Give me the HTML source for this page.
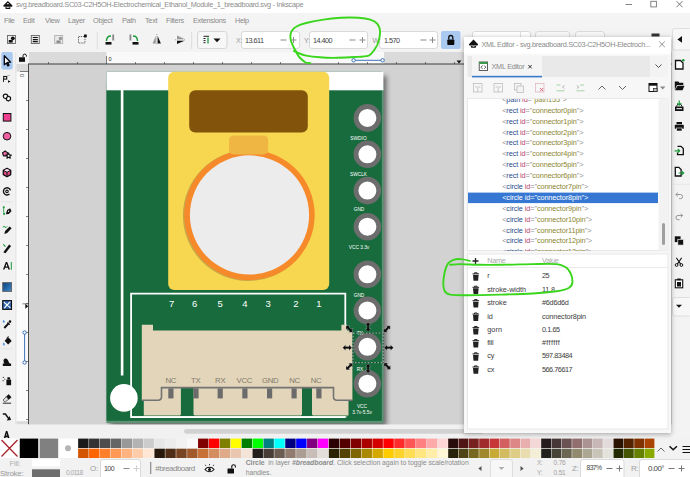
<!DOCTYPE html>
<html><head><meta charset="utf-8">
<style>
html,body{margin:0;padding:0;}
body{width:690px;height:477px;overflow:hidden;background:#f2f2f2;font-family:"Liberation Sans",sans-serif;position:relative;}
.a{position:absolute;}
.t{position:absolute;white-space:nowrap;line-height:1;}
#title{left:0;top:0;width:690px;height:13px;background:#fff;}
#menu{left:0;top:13px;width:690px;height:15px;background:#f4f4f4;}
#menu .t{font-size:7.3px;letter-spacing:-.28px;color:#8a8a8a;top:4px;}
#tool{left:0;top:28px;width:690px;height:24px;background:#f3f3f3;}
.inp{position:absolute;background:#fff;border:1px solid #dcdcdc;border-radius:2px;box-sizing:border-box;}
#lbox{left:0;top:52px;width:14px;height:386px;background:#f1f1f1;}
#canvas{left:14px;top:52px;width:658px;height:386px;background:#d2d2d2;overflow:hidden;}
#rbar{left:672px;top:28px;width:18px;height:410px;background:#f3f3f3;}
#pal{left:0;top:438px;width:690px;height:20px;background:#f2f2f2;}
#status{left:0;top:458px;width:690px;height:19px;background:#f2f2f2;}
#status .t{font-size:8px;color:#999;}
.u{font-size:7.300px;letter-spacing:-.28px;}
.tr{font-size:7.300px;letter-spacing:-.1px;color:#8a8a8a}
.tr i,.tr b,.tr u,.tr s{font-style:normal;font-weight:normal;text-decoration:none}
.tr i{color:#909090}.tr b{color:#2b4c8c}.tr u{color:#b8446e}.tr s{color:#8c8632}
.sel i,.sel b,.sel u,.sel s{color:#fff}
.at{color:#3c3c3c;letter-spacing:-.15px}
#dlg{left:464px;top:37px;width:207px;height:396px;background:#f7f7f7;box-shadow:0 1px 5px rgba(0,0,0,.33);}
</style></head><body>
<div id="title" class="a">
  <svg class="a" style="left:0;top:0" width="690" height="13">
    <g transform="translate(1.900 -.3)"><path d="M6 1.200l4.300 4.300c.5.600.2 1.500-.5 1.500h-7.600c-.7 0-1-.9-.5-1.500z" fill="#111"/>
    <path d="M3.500 7.800c.8-.5 1.600.6 2.500.6s1.700-1.100 2.500-.6c.5.400 0 1.200-.7 1.500h-3.600c-.7-.3-1.200-1.100-.7-1.500z" fill="#111"/><path d="M4.600 4.600l1.400-1.500 1.400 1.500-.7-.3-.7.500-.7-.5z" fill="#fff"/></g>
    <path d="M625.500 4.500h6.500" stroke="#777" stroke-width=".9"/>
    <rect x="650.800" y="1.300" width="5.600" height="5.600" fill="none" stroke="#777" stroke-width=".9"/>
    <path d="M676.500 1.200l6 6M682.500 1.200l-6 6" stroke="#666" stroke-width=".9"/>
  </svg>
  <div class="t" style="left:16px;top:1.200px;font-size:7.300px;letter-spacing:-.295px;color:#8c8c8c;">svg.breadboard.SC03-C2H5OH-Electrochemical_Ethanol_Module_1_breadboard.svg - Inkscape</div>
</div>
<div id="menu" class="a">
  <div class="t" style="left:4px">File</div><div class="t" style="left:23px">Edit</div><div class="t" style="left:45px">View</div><div class="t" style="left:68px">Layer</div><div class="t" style="left:93px">Object</div><div class="t" style="left:122px">Path</div><div class="t" style="left:145px">Text</div><div class="t" style="left:166px">Filters</div><div class="t" style="left:193px">Extensions</div><div class="t" style="left:235px">Help</div>
</div>
<div id="tool" class="a">
<svg class="a" style="left:0;top:0" width="690" height="24" viewBox="0 28 690 24">
  <!-- icon 1 -->
  <g><rect x="7.500" y="35.500" width="8" height="8" fill="#ededed" stroke="#666" stroke-width=".9"/><rect x="8.700" y="40" width="4" height="2.600" fill="#111"/><circle cx="12.800" cy="38.300" r="1.900" fill="#111"/></g>
  <g><rect x="31.300" y="35.500" width="8" height="8" fill="#ededed" stroke="#666" stroke-width=".9"/><path d="M32.800 37.500h5M32.800 39.600h5M32.800 41.700h5" stroke="#111" stroke-width="1.200"/></g>
  <g><rect x="54.700" y="35.500" width="8" height="8" fill="#e8e8e8" stroke="#aaa" stroke-width=".8"/><rect x="56.5" y="40.5" width="4" height="2.4" fill="#888"/><circle cx="60.5" cy="38.5" r="1.8" fill="#999"/></g>
  <g><rect x="78.5" y="36.5" width="6.5" height="6.5" fill="none" stroke="#444" stroke-width=".8" stroke-dasharray="1.3 .9"/><rect x="84" y="34.5" width="2.8" height="2.8" fill="#111"/></g>
  <path d="M97.3 32v17" stroke="#dcdcdc" stroke-width="1"/>
  <g><rect x="105.5" y="42" width="6" height="2.6" fill="#111"/><rect x="112.3" y="34.5" width="1.8" height="6" fill="#888"/><path d="M106.5 41c0-3 1.5-5 4.5-5" stroke="#1a9a3a" stroke-width="1.4" fill="none"/></g>
  <g><rect x="132.5" y="42" width="6" height="2.6" fill="#111"/><rect x="129.5" y="34.5" width="1.8" height="6" fill="#888"/><path d="M137.5 41c0-3-1.5-5-4.500-5" stroke="#1a9a3a" stroke-width="1.4" fill="none"/></g>
  <g><path d="M155.800 36l-3.300 7.500h3.300z" fill="#999"/><path d="M157.600 36l3.300 7.500h-3.300z" fill="#111"/><path d="M156.800 34v11" stroke="#555" stroke-width=".5" stroke-dasharray="1 .8"/></g>
  <g><path d="M184.500 38.900l-7.500-3.300v3.300z" fill="#999"/><path d="M184.500 40.700l-7.500 3.300v-3.300z" fill="#111"/><path d="M175 39.800h10" stroke="#555" stroke-width=".5" stroke-dasharray="1 .8"/></g>
  <path d="M191.700 32v17" stroke="#dcdcdc" stroke-width="1"/>
  <rect x="197.500" y="31.500" width="29.500" height="17" rx="2.500" fill="#f7f7f7" stroke="#d6d6d6" stroke-width="1"/>
  <g><path d="M203.500 36.300h5.500M203.500 38.500h2M203.500 40.600h2M203.500 42.700h2" stroke="#222" stroke-width="1"/><path d="M208 37.500v6" stroke="#1a9a3a" stroke-width="1.300"/><path d="M213.500 38.500h7l-3.500 3.800z" fill="#111"/></g>
  <!-- XYW inputs -->
  <rect x="241.500" y="31.500" width="58" height="17" rx="2.500" fill="#fff" stroke="#dadada"/>
  <rect x="309.500" y="31.500" width="58" height="17" rx="2.500" fill="#fff" stroke="#dadada"/>
  <rect x="379.500" y="31.500" width="58" height="17" rx="2.500" fill="#fff" stroke="#dadada"/>
  <g stroke="#8a8a8a" stroke-width="1" fill="none">
    <path d="M280.500 40h6M290.500 40h6M293.500 37v6"/>
    <path d="M349.500 40h6M359.500 40h6M362.500 37v6"/>
    <path d="M420.500 40h6M429.500 40h6M432.500 37v6"/>
  </g>
  <rect x="441" y="31" width="19.500" height="18" rx="2" fill="#a9c9f1"/>
  <g><rect x="447.300" y="39.500" width="7" height="5.500" rx=".8" fill="#0a0a0a"/><path d="M448.800 39.500v-2a2 2 0 0 1 4 0v2" fill="none" stroke="#0a0a0a" stroke-width="1.300"/></g>
  <!-- right part hidden partly by dialog -->
  <rect x="472.500" y="31.500" width="58" height="17" rx="2.500" fill="#fff" stroke="#dadada"/>
  <rect x="535.500" y="31.500" width="34" height="17" rx="2.500" fill="#f7f7f7" stroke="#dadada"/>
  <rect x="575.500" y="31.500" width="29" height="17" rx="2.500" fill="#f7f7f7" stroke="#dadada"/>
  <path d="M520.500 32v16" stroke="#e0e0e0"/>
  <rect x="651.500" y="33.500" width="8" height="3" fill="#333"/>
  <path d="M682.500 36.300v6.400l-4.500-3.200z" fill="#111"/>
</svg>
<div class="t" style="left:236px;top:9px;font-size:7px;color:#9a9a9a">X:</div>
<div class="t" style="left:245px;top:8.500px;font-size:7.300px;color:#444;letter-spacing:-0.55px">13.611</div>
<div class="t" style="left:304px;top:9px;font-size:7px;color:#9a9a9a">Y:</div>
<div class="t" style="left:313px;top:8.500px;font-size:7.300px;color:#444;letter-spacing:-0.55px">14.400</div>
<div class="t" style="left:372.500px;top:9px;font-size:7px;color:#9a9a9a">W:</div>
<div class="t" style="left:384px;top:8.500px;font-size:7.300px;color:#444;letter-spacing:-0.55px">1.570</div>
</div>
<div id="lbox" class="a">
<svg class="a" style="left:0;top:0" width="14" height="386" viewBox="0 52 14 386">
  <rect x="1.300" y="52" width="11.400" height="17.500" rx="2" fill="#a9c9f1"/>
  <path d="M4.300 55.800v9l2.200-1.900 1.300 3 1.200-.6-1.300-2.900 2.900-.2z" fill="#fff" stroke="#0a0a14" stroke-width="1.350" stroke-linejoin="round"/>
  <!-- node -->
  <rect x="3.700" y="76.500" width="3" height="2.600" fill="#fff" stroke="#111" stroke-width="1.100"/><path d="M3.500 79v3" stroke="#111" stroke-width=".9"/><path d="M7.300 75.600l2.800-.4" stroke="#777" stroke-width=".5"/><path d="M8 80.200l2.600 1.300-2.600 1.300z" fill="#111"/>
  <!-- shape builder -->
  <circle cx="5.500" cy="96.300" r="2.200" fill="#fff" stroke="#111" stroke-width="1.200"/><path d="M6.800 97.300l1.600-1 2.100 1.100v2.400l-2.100 1.300-2-1.200z" fill="#fff" stroke="#111" stroke-width="1.200" stroke-linejoin="round"/>
  <rect x="3.300" y="113.500" width="7.600" height="7.600" fill="#ee3f90" stroke="#111" stroke-width="1"/>
  <circle cx="7" cy="136.200" r="3.800" fill="#ee5fa0" stroke="#111" stroke-width="1"/>
  <path d="M5.10 151.00L7.67 152.87L6.69 155.88L3.51 155.88L2.53 152.87Z" fill="#f06aa6" stroke="#111" stroke-width="1.200" stroke-linejoin="round"/><path d="M8.60 153.00L9.36 154.85L11.36 155.00L9.84 156.30L10.30 158.25L8.60 157.20L6.90 158.25L7.36 156.30L5.84 155.00L7.84 154.85Z" fill="#fff" stroke="#111" stroke-width="1.100" stroke-linejoin="round"/>
  <path d="M7 168.300l3.700 2v4.300l-3.700 2.200-3.700-2.200v-4.300z" fill="#dc4c86" stroke="#111" stroke-width="1.300" stroke-linejoin="round"/><path d="M3.900 170.600l3.100-1.600 3.100 1.600-3.100 1.700z" fill="#fbe3ee"/><path d="M3.300 170.300l3.700 2 3.700-2M7 172.300v4.300" stroke="#111" stroke-width="1" fill="none"/>
  <circle cx="7" cy="191.400" r="1.250" fill="none" stroke="#111" stroke-width="1.100"/><path d="M9.500 194a3.600 3.600 0 1 1 1-3.600" fill="none" stroke="#111" stroke-width="1.350"/>
  <path d="M1 201.700h12" stroke="#e0e0e0" stroke-width=".7"/>
  <path d="M3.800 207.500c-.5 2.500 0 4.500 .3 6.500" stroke="#1a9a3a" stroke-width=".9" fill="none"/><rect x="2.800" y="206.300" width="1.800" height="1.800" fill="#1a9a3a"/><rect x="3.200" y="213" width="1.800" height="1.800" fill="#1a9a3a"/><path d="M5.800 214.200l1.300-4.300 3-1.700 1.400 3.100-2.700 2.800z" fill="#111"/><circle cx="8.600" cy="211.300" r=".7" fill="#fff"/>
  <path d="M4.300 234l.8-2.900 4.500-4.700 2 1.900-4.400 4.700z" fill="#111"/><path d="M2.800 227.300q1.200-1.800 2.200-.3t2.200-.6" stroke="#1a9a3a" stroke-width="1" fill="none"/>
  <path d="M3.300 252.300l5.800-7.800 2 1.500-5.600 7.200z" fill="#111"/><path d="M3.300 244.300l2.200 2.300" stroke="#1a9a3a" stroke-width="1.100"/>
  <path d="M3 269.500l2.800-7.500h1.400l2.800 7.500h-1.600l-.6-1.800h-2.700l-.6 1.800zM5.600 266.400h1.800l-.9-2.700z" fill="#111"/><path d="M11.300 262v7.800" stroke="#1a9a3a" stroke-width="1"/>
  <linearGradient id="gg" x1="0" y1="0" x2="1" y2="1"><stop offset="0" stop-color="#0b3f7a"/><stop offset="1" stop-color="#3a8ad0"/></linearGradient><rect x="2.700" y="282.600" width="8.800" height="8.800" fill="url(#gg)" stroke="#666" stroke-width="1"/>
  <rect x="2.700" y="300.600" width="8.800" height="8.800" fill="#2a62b0" stroke="#111" stroke-width="1.100"/><path d="M7.100 305c-2-2.500-3-1.500-3-3.300M7.100 305c2.500-2 1.500-3 3.300-3M7.100 305c2 2.500 3 1.500 3 3.300M7.100 305c-2.500 2-1.500 3-3.300 3" stroke="#fff" stroke-width="1.100" fill="none"/>
  <path d="M4.300 328l4.300-4.600" stroke="#111" stroke-width="2"/><path d="M7.500 322.300l2.300 2.300" stroke="#111" stroke-width="1.200"/><circle cx="10" cy="321.600" r="1.300" fill="#111"/><path d="M3.600 320.200c.9 1.200 1.100 1.900 .3 2.600c-.9-.7-.9-1.400-.3-2.600z" fill="#2a7fe0" stroke="#2a7fe0" stroke-width=".4"/>
  <path d="M8.300 337.300l3.400 3.700-3.600 3.400-3.500-3.600z" fill="#111"/><path d="M6.500 338.500l2-2.300" stroke="#111" stroke-width=".9"/><path d="M3.700 342.800c.9 1.200 1.100 1.900 .3 2.600c-.9-.7-.9-1.400-.3-2.600z" fill="#2a7fe0" stroke="#2a7fe0" stroke-width=".4"/>
  <path d="M1 348.800h12" stroke="#e0e0e0" stroke-width=".7"/>
  <path d="M2.800 366h8.300v-2.300c-1.300 0-2.100-.7-2.500-2c-.5-1.800-1.500-3.200-3-3.200c-1.500 0-2.100 1.300-2.100 2.500c0 1 .4 1.700 .9 2.400h-1.600z" fill="#111"/>
  <rect x="6.400" y="379.600" width="4.700" height="5.600" fill="#111"/><rect x="7.400" y="377.300" width="2.700" height="2.300" fill="#111"/><circle cx="3.300" cy="377.400" r=".6" fill="#333"/><circle cx="4.800" cy="379.100" r=".6" fill="#333"/><circle cx="3.100" cy="380.700" r=".6" fill="#333"/>
  <path d="M6.300 396.600l2.600-2 2.200 2.800-2.600 2z" fill="#111" stroke="#111" stroke-width=".6"/><path d="M6.300 396.600l2.200 2.800-2.900 2.300h-1.200l-1.300-1.700z" fill="#ddd" stroke="#333" stroke-width=".7"/><path d="M2.800 403.200h8.300" stroke="#111" stroke-width=".9"/>
  <path d="M2.800 414h2.600l3.300 4.600" stroke="#111" stroke-width="1.500" fill="none"/><path d="M6.800 420.400l4.300-.3-1.600-4z" fill="#111"/>
  <path d="M3.600 438.700l2.300-7.600h1.500l2.300 7.600h-1.700l-.4-1.500h-1.900l-.4 1.500zM6.100 435.600h1.100l-.55-2z" fill="#111" fill-rule="evenodd"/>
</svg></div>
<div id="canvas" class="a">
<svg class="a" style="left:0;top:0" width="658" height="386" viewBox="14 52 658 386">
  <!-- page shadow -->
  <defs><filter id="bl" x="-5%" y="-5%" width="110%" height="110%"><feGaussianBlur stdDeviation="2.800"/></filter></defs>
  <rect x="110" y="76" width="276.500" height="350" fill="#000" opacity=".5" filter="url(#bl)"/>
  <rect x="106.500" y="85" width="277.200" height="338.100" fill="#5f9275"/>
  <rect x="106.500" y="71.700" width="275.300" height="349.100" fill="#176b3d"/>
  <rect x="106.500" y="71.700" width="276.900" height="18.600" fill="#fff"/>
  <rect x="120.8" y="90" width="2.6" height="285.5" fill="#fff"/>
  <circle cx="123.9" cy="397.9" r="13.8" fill="#fff"/>
  <rect x="168.200" y="71.700" width="161" height="218.300" rx="6" fill="#f8d750"/>
  <rect x="189.200" y="90.200" width="118.600" height="42.200" rx="6" fill="#82530a"/>
  <circle cx="248.300" cy="215.500" r="65.400" fill="#c9a748"/>
  <circle cx="249.500" cy="214.900" r="65.200" fill="#f6892a"/>
  <rect x="229" y="135.500" width="39.200" height="18.900" rx="4.500" fill="#efb643"/>
  <circle cx="249.500" cy="214.950" r="59.600" fill="#ececec"/>
  <!-- inner frame -->
  <path d="M345.300 325v-31.400h-214.200v123.500h214.200" fill="none" stroke="#fff" stroke-width="1.800"/>
  <!-- connector beige -->
  <path d="M141.800 324.700H153V330.400H341.400V324.700H347V330.400H352.400V400.200H337Q333.500 400.200 333.500 396.700V387.600H161.500V396.700Q161.500 400.200 158 400.200H141.800Z" fill="#e3d5ba"/>
  <path d="M143.800 415.500V400.200H158Q161.500 400.200 161.500 396.700V387.600H180.900V414.500l-1 1ZM193.500 387.600H302V414.500l-1 1H194.500l-1-1ZM312 387.600H333.500V396.700Q333.500 400.200 337 400.200H348.500V415.500H313l-1-1Z" fill="#e3d5ba"/>
  <path d="M141.800 400.200H158Q161.500 400.200 161.500 396.700V387.600H333.500V396.700Q333.500 400.200 337 400.200H352.400" fill="none" stroke="#737373" stroke-width="1.600"/>
  <path d="M131.100 416.800H346.500" stroke="#fff" stroke-width="1.300"/>
  <g fill="#6b6b6b">
   <rect x="168.300" y="388.400" width="5.200" height="10"/><rect x="193.400" y="388.400" width="5.200" height="10"/><rect x="217.600" y="388.400" width="5.200" height="10"/><rect x="242.300" y="388.400" width="5.200" height="10"/><rect x="267" y="388.400" width="5.200" height="10"/><rect x="291.500" y="388.400" width="5.200" height="10"/><rect x="316.300" y="388.400" width="5.200" height="10"/>
  </g>
  <g font-family="Liberation Sans, sans-serif" font-size="9.500" fill="#fff" text-anchor="middle">
   <text x="171.700" y="307.300">7</text><text x="194.700" y="307.300">6</text><text x="220.200" y="307.300">5</text><text x="245" y="307.300">4</text><text x="268.200" y="307.300">3</text><text x="295.900" y="307.300">2</text><text x="318.900" y="307.300">1</text>
  </g>
  <g font-family="Liberation Sans, sans-serif" font-size="7.800" fill="#807a6c" text-anchor="middle" letter-spacing="-.3">
   <text x="170.800" y="382.800">NC</text><text x="195.800" y="382.800">TX</text><text x="220.200" y="382.800">RX</text><text x="244.300" y="382.800">VCC</text><text x="270.200" y="382.800">GND</text><text x="294.500" y="382.800">NC</text><text x="316" y="382.800">NC</text>
  </g>
  <!-- pins -->
  <g fill="#fff" stroke="#6d6d6d" stroke-width="4.800">
   <circle cx="367.400" cy="117.9" r="11.400"/><circle cx="367.400" cy="154.3" r="11.400"/><circle cx="367.400" cy="190.6" r="11.400"/><circle cx="367.400" cy="226.7" r="11.400"/><circle cx="367.400" cy="274.3" r="11.400"/><circle cx="367.400" cy="310.4" r="11.400"/><circle cx="367.400" cy="346.8" r="11.400"/><circle cx="367.400" cy="383.7" r="11.400"/>
  </g>
  <g font-family="Liberation Sans, sans-serif" font-size="4.800" fill="#fff" text-anchor="middle">
   <text x="358.500" y="139.800">SWDIO</text><text x="358.500" y="176">SWCLK</text><text x="359" y="211.300">GND</text><text x="359" y="248.800">VCC 3.3v</text><text x="359" y="297.300">GND</text><text x="360" y="334.500">TX</text><text x="360" y="370.800">RX</text><text x="362" y="407.500">VCC</text><text x="362" y="414.300">3.7v-5.5v</text>
  </g>
  <!-- selection -->
  <rect x="353" y="333.100" width="30.200" height="29.600" fill="none" stroke="#20302a" stroke-width=".7"/>
  <rect x="353" y="333.100" width="30.200" height="29.600" fill="none" stroke="#d4efe6" stroke-width=".7" stroke-dasharray="1.700 1.500"/>
  <g fill="#0c0c0c" stroke="#e8e8e8" stroke-width=".25">
    <path transform="translate(368.1 327) rotate(90)" d="M-4.700 0L-1.700-2.900V-1.150H1.700V-2.900L4.700 0L1.700 2.900V1.150H-1.700V2.900Z"/>
    <path transform="translate(368.1 368.5) rotate(90)" d="M-4.700 0L-1.700-2.900V-1.150H1.700V-2.900L4.700 0L1.700 2.900V1.150H-1.700V2.900Z"/>
    <path transform="translate(347.3 347.7) rotate(0)" d="M-4.700 0L-1.700-2.900V-1.150H1.700V-2.900L4.700 0L1.700 2.900V1.150H-1.700V2.900Z"/>
    <path transform="translate(388.8 347.7) rotate(0)" d="M-4.700 0L-1.700-2.900V-1.150H1.700V-2.900L4.700 0L1.700 2.900V1.150H-1.700V2.900Z"/>
    <path transform="translate(349.3 329) rotate(45)" d="M-4.700 0L-1.700-2.900V-1.150H1.700V-2.900L4.700 0L1.700 2.900V1.150H-1.700V2.900Z"/>
    <path transform="translate(386.9 329) rotate(-45)" d="M-4.700 0L-1.700-2.900V-1.150H1.700V-2.900L4.700 0L1.700 2.900V1.150H-1.700V2.900Z"/>
    <path transform="translate(349.3 366.5) rotate(-45)" d="M-4.700 0L-1.700-2.900V-1.150H1.700V-2.900L4.700 0L1.700 2.900V1.150H-1.700V2.900Z"/>
    <path transform="translate(387.2 366.2) rotate(45)" d="M-4.700 0L-1.700-2.900V-1.150H1.700V-2.900L4.700 0L1.700 2.900V1.150H-1.700V2.900Z"/>
  </g>
  <!-- rulers -->
  <rect x="14" y="52" width="658" height="12" fill="#dadada"/>
  <rect x="106.500" y="52" width="277.500" height="12" fill="#f9f9f9"/>
  <rect x="14" y="52" width="15" height="386" fill="#f3f3f3"/>
  <rect x="16.500" y="64" width="12" height="360.500" fill="#dadada"/>
  <rect x="16.500" y="71.700" width="12" height="349.500" fill="#fbfbfb"/>
  <rect x="15.300" y="52" width=".8" height="386" fill="#e2e2e2"/>
  <rect x="28.500" y="63.500" width="643" height="1" fill="#3c3c3c"/>
  <rect x="28" y="63.500" width="1" height="361" fill="#4a4a4a"/>
  <g stroke="#333" stroke-width=".6">
    <path d="M106.500 56v8M135.500 62v2M164.500 62v2M193.500 62v2M222.500 62v2M251.500 62v2M280.500 62v2M309.500 62v2M338.500 62v2M367.500 62v2M396.500 62v2M425.500 62v2M454.500 62v2M48.500 62v2M77.500 62v2"/>
    <path d="M26 100.500h2.500M26 129.500h2.500M26 158.500h2.500M26 187.500h2.500M26 216.500h2.500M26 245.500h2.500M26 274.500h2.500M26 303.500h2.500M26 332.500h2.500M26 361.500h2.500M26 390.500h2.500M26 419.500h2.500M20 71.500h8.500"/>
  </g>
  <text x="108.500" y="60.500" font-family="Liberation Sans, sans-serif" font-size="5.500" fill="#222">0</text>
  <clipPath id="c0"><rect x="19" y="73.800" width="8" height="3"/></clipPath><g clip-path="url(#c0)"><text x="0" y="0" font-family="Liberation Sans, sans-serif" font-size="6" fill="#444" transform="translate(24.300 75.600) rotate(-90)" text-anchor="middle">0</text></g>
  <!-- ruler selection indicators -->
  <path d="M353.600 60.300h29" stroke="#2a62b0" stroke-width=".9"/><circle cx="353.600" cy="60.300" r="1.700" fill="#fff" stroke="#2a62b0" stroke-width=".9"/><circle cx="382.600" cy="60.300" r="1.700" fill="#fff" stroke="#2a62b0" stroke-width=".9"/>
  <path d="M24.600 332.500v30" stroke="#2a62b0" stroke-width=".9"/><circle cx="24.600" cy="332.500" r="1.700" fill="#fff" stroke="#2a62b0" stroke-width=".9"/><circle cx="24.600" cy="362.500" r="1.700" fill="#fff" stroke="#2a62b0" stroke-width=".9"/>
  <path d="M456.500 60.500h5l-2.500 3z" fill="#111"/>
  <path d="M25.300 303.800v5l3-2.500z" fill="#111"/><path d="M22.500 303.800h6" stroke="#333" stroke-width=".6"/>
  <!-- lock in corner -->
  <rect x="19" y="57.300" width="6" height="4.500" fill="#111"/><path d="M23 57.300v-1.500a1.700 1.700 0 0 1 3.400 0v.8" stroke="#111" stroke-width="1" fill="none"/>
  <!-- bottom scrollbar strip -->
  <rect x="14" y="424.500" width="658" height="13.500" fill="#f1f1f1"/>
  <rect x="184" y="428.900" width="300" height="4.800" rx="2.400" fill="#d2d2d2"/>
</svg>
</div>
<div id="rbar" class="a">
<svg class="a" style="left:0;top:0" width="18" height="410" viewBox="672 28 18 410">
  <rect x="672.500" y="28.500" width="19" height="21.500" rx="2" fill="#f7f7f7" stroke="#dedede"/>
  <path d="M682 36v6.800l-4.600-3.400z" fill="#111"/>
  <!-- new -->
  <path d="M675.500 60.500h5l2.500 2.500v6h-7.500z" fill="#fff" stroke="#111" stroke-width="1.300"/><circle cx="683.300" cy="60.200" r="1.300" fill="#1a9a3a"/>
  <!-- open -->
  <path d="M674.800 81.500h3.500l1 1.300h4v2.200h-6.300l-2.200 4.800z" fill="#111"/><path d="M677.500 85.800h7l-2 4.400h-7.500z" fill="#111"/>
  <!-- save -->
  <path d="M675 106.500h8.500v4.500h-8.500z" fill="#111"/><path d="M676.500 106.500l1-2h3.500l1 2" fill="none" stroke="#111" stroke-width="1"/><path d="M679.250 100.500v4.500M677.300 103.200l1.950 2 1.950-2" stroke="#1a9a3a" stroke-width="1.200" fill="none"/><rect x="676.500" y="108.200" width="5.500" height="1" fill="#fff"/>
  <!-- print -->
  <rect x="676.500" y="122" width="5.500" height="2.200" fill="#111"/><rect x="674.800" y="124.800" width="9" height="4" rx=".6" fill="#111"/><rect x="676.500" y="128" width="5.500" height="3" fill="#111" stroke="#f3f3f3" stroke-width=".6"/>
  <!-- import -->
  <path d="M677.500 146.300h3.500l2.300 2.300v6h-5.800v-2" fill="none" stroke="#111" stroke-width="1.300"/><path d="M674.500 150.800h5M677.700 148.900l2 1.900-2 1.900" stroke="#1a9a3a" stroke-width="1.200" fill="none"/>
  <!-- export -->
  <path d="M675.300 167.300h3.500l2.300 2.300v6.400h-5.800z" fill="#fff" stroke="#111" stroke-width="1.300"/><path d="M678.500 173h5M681.700 171.100l2 1.900-2 1.900" stroke="#1a9a3a" stroke-width="1.200" fill="none"/>
  <path d="M673 184.300h17" stroke="#e2e2e2" stroke-width=".8"/>
  <!-- undo / redo -->
  <path d="M676 194.500h4.500a2 2 0 0 1 0 4.200h-1.500M677.800 192.600l-2 1.900 2 1.900" fill="none" stroke="#8c8c8c" stroke-width=".9"/>
  <path d="M682.500 215.500h-4.500a2 2 0 0 0 0 4.200h1.500M680.700 213.600l2 1.900-2 1.900" fill="none" stroke="#8c8c8c" stroke-width=".9"/>
  <!-- copy -->
  <rect x="674.800" y="236.300" width="5.800" height="5.800" fill="#111"/><rect x="677.800" y="239.300" width="5.800" height="5.800" fill="#111" stroke="#f3f3f3" stroke-width=".7"/>
  <!-- cut -->
  <path d="M676.300 257.800l4.400 6.300M681.700 257.800l-4.400 6.300" stroke="#111" stroke-width="1.100"/><circle cx="676.600" cy="265" r="1.400" fill="none" stroke="#111" stroke-width="1"/><circle cx="681.400" cy="265" r="1.400" fill="none" stroke="#111" stroke-width="1"/>
  <!-- paste -->
  <rect x="675.300" y="279.800" width="7.400" height="8" fill="#fff" stroke="#111" stroke-width="1.100"/><rect x="677" y="282" width="4" height="4.500" fill="#111"/><rect x="677.300" y="278.500" width="3.400" height="1.800" fill="#111"/>
  <!-- dropdown -->
  <rect x="672.500" y="297.500" width="19" height="18.500" rx="2" fill="#f7f7f7" stroke="#dedede"/>
  <path d="M676 304.800h6l-3 3z" fill="#111"/>
</svg></div>

<div id="pal" class="a">
<svg class="a" style="left:0;top:0" width="690" height="20" viewBox="0 438 690 20">
<rect x="0" y="438.500" width="19" height="19.500" fill="#fff"/><path d="M1.500 440l16 16.500M17.500 440l-16 16.500" stroke="#a8242c" stroke-width="1.300"/>
<rect x="19.800" y="438.600" width="18.400" height="19.400" fill="#000"/><rect x="39.700" y="438.600" width="18.400" height="19.400" fill="#808080"/><rect x="59.200" y="438.600" width="18.400" height="19.400" fill="#fff"/><circle cx="68" cy="448.200" r="3" fill="#b4b4b4"/>
<rect x="78.15" y="438.600" width="10.40" height="9.400" fill="#1a1a1a"/>
<rect x="89.05" y="438.600" width="10.40" height="9.400" fill="#333333"/>
<rect x="99.95" y="438.600" width="10.40" height="9.400" fill="#4d4d4d"/>
<rect x="110.85" y="438.600" width="10.40" height="9.400" fill="#666666"/>
<rect x="121.75" y="438.600" width="10.40" height="9.400" fill="#999999"/>
<rect x="132.65" y="438.600" width="10.40" height="9.400" fill="#b3b3b3"/>
<rect x="143.55" y="438.600" width="10.40" height="9.400" fill="#cccccc"/>
<rect x="154.45" y="438.600" width="10.40" height="9.400" fill="#e6e6e6"/>
<rect x="165.35" y="438.600" width="10.40" height="9.400" fill="#ececec"/>
<rect x="176.25" y="438.600" width="10.40" height="9.400" fill="#f2f2f2"/>
<rect x="187.15" y="438.600" width="10.40" height="9.400" fill="#f9f9f9"/>
<rect x="198.05" y="438.600" width="10.40" height="9.400" fill="#800000"/>
<rect x="208.95" y="438.600" width="10.40" height="9.400" fill="#ff0000"/>
<rect x="219.85" y="438.600" width="10.40" height="9.400" fill="#808000"/>
<rect x="230.75" y="438.600" width="10.40" height="9.400" fill="#ffff00"/>
<rect x="241.65" y="438.600" width="10.40" height="9.400" fill="#008000"/>
<rect x="252.55" y="438.600" width="10.40" height="9.400" fill="#00ff00"/>
<rect x="263.45" y="438.600" width="10.40" height="9.400" fill="#008080"/>
<rect x="274.35" y="438.600" width="10.40" height="9.400" fill="#00ffff"/>
<rect x="285.25" y="438.600" width="10.40" height="9.400" fill="#000080"/>
<rect x="296.15" y="438.600" width="10.40" height="9.400" fill="#0000ff"/>
<rect x="307.05" y="438.600" width="10.40" height="9.400" fill="#800080"/>
<rect x="317.95" y="438.600" width="10.40" height="9.400" fill="#ff00ff"/>
<rect x="328.85" y="438.600" width="10.40" height="9.400" fill="#2b0000"/>
<rect x="339.75" y="438.600" width="10.40" height="9.400" fill="#550000"/>
<rect x="350.65" y="438.600" width="10.40" height="9.400" fill="#800000"/>
<rect x="361.55" y="438.600" width="10.40" height="9.400" fill="#aa0000"/>
<rect x="372.45" y="438.600" width="10.40" height="9.400" fill="#d40000"/>
<rect x="383.35" y="438.600" width="10.40" height="9.400" fill="#ff0000"/>
<rect x="394.25" y="438.600" width="10.40" height="9.400" fill="#ff2a2a"/>
<rect x="405.15" y="438.600" width="10.40" height="9.400" fill="#ff5555"/>
<rect x="416.05" y="438.600" width="10.40" height="9.400" fill="#ff8080"/>
<rect x="426.95" y="438.600" width="10.40" height="9.400" fill="#ffaaaa"/>
<rect x="437.85" y="438.600" width="9.83" height="9.400" fill="#ffd5d5"/>
<rect x="448.19" y="438.600" width="9.84" height="9.400" fill="#280b0b"/>
<rect x="458.52" y="438.600" width="9.83" height="9.400" fill="#501616"/>
<rect x="468.86" y="438.600" width="9.84" height="9.400" fill="#782121"/>
<rect x="479.19" y="438.600" width="9.83" height="9.400" fill="#a02c2c"/>
<rect x="489.53" y="438.600" width="9.83" height="9.400" fill="#c83737"/>
<rect x="499.86" y="438.600" width="9.84" height="9.400" fill="#d35f5f"/>
<rect x="510.20" y="438.600" width="9.83" height="9.400" fill="#de8787"/>
<rect x="520.53" y="438.600" width="9.84" height="9.400" fill="#e9afaf"/>
<rect x="530.87" y="438.600" width="9.84" height="9.400" fill="#f4d7d7"/>
<rect x="541.20" y="438.600" width="9.84" height="9.400" fill="#241c1c"/>
<rect x="551.54" y="438.600" width="9.83" height="9.400" fill="#483737"/>
<rect x="561.87" y="438.600" width="9.84" height="9.400" fill="#6c5353"/>
<rect x="572.21" y="438.600" width="9.83" height="9.400" fill="#916f6f"/>
<rect x="582.54" y="438.600" width="9.84" height="9.400" fill="#ac9393"/>
<rect x="592.88" y="438.600" width="9.84" height="9.400" fill="#c8b7b7"/>
<rect x="603.21" y="438.600" width="9.84" height="9.400" fill="#e3dbdb"/>
<rect x="613.55" y="438.600" width="9.84" height="9.400" fill="#2b1100"/>
<rect x="623.88" y="438.600" width="9.83" height="9.400" fill="#552200"/>
<rect x="634.22" y="438.600" width="9.84" height="9.400" fill="#803300"/>
<rect x="644.55" y="438.600" width="9.83" height="9.400" fill="#aa4400"/>
<rect x="78.15" y="448.700" width="10.40" height="9.300" fill="#d45500"/>
<rect x="89.05" y="448.700" width="10.40" height="9.300" fill="#ff6600"/>
<rect x="99.95" y="448.700" width="10.40" height="9.300" fill="#ff7f2a"/>
<rect x="110.85" y="448.700" width="10.40" height="9.300" fill="#ff9955"/>
<rect x="121.75" y="448.700" width="10.40" height="9.300" fill="#ffb380"/>
<rect x="132.65" y="448.700" width="10.40" height="9.300" fill="#ffccaa"/>
<rect x="143.55" y="448.700" width="10.40" height="9.300" fill="#ffe6d5"/>
<rect x="154.45" y="448.700" width="10.40" height="9.300" fill="#28170b"/>
<rect x="165.35" y="448.700" width="10.40" height="9.300" fill="#502d16"/>
<rect x="176.25" y="448.700" width="10.40" height="9.300" fill="#784421"/>
<rect x="187.15" y="448.700" width="10.40" height="9.300" fill="#a05a2c"/>
<rect x="198.05" y="448.700" width="10.40" height="9.300" fill="#c87137"/>
<rect x="208.95" y="448.700" width="10.40" height="9.300" fill="#d38d5f"/>
<rect x="219.85" y="448.700" width="10.40" height="9.300" fill="#deaa87"/>
<rect x="230.75" y="448.700" width="10.40" height="9.300" fill="#e9c6af"/>
<rect x="241.65" y="448.700" width="10.40" height="9.300" fill="#f4e3d7"/>
<rect x="252.55" y="448.700" width="10.40" height="9.300" fill="#241f1c"/>
<rect x="263.45" y="448.700" width="10.40" height="9.300" fill="#483e37"/>
<rect x="274.35" y="448.700" width="10.40" height="9.300" fill="#6c5d53"/>
<rect x="285.25" y="448.700" width="10.40" height="9.300" fill="#917c6f"/>
<rect x="296.15" y="448.700" width="10.40" height="9.300" fill="#ac9d93"/>
<rect x="307.05" y="448.700" width="10.40" height="9.300" fill="#c8beb7"/>
<rect x="317.95" y="448.700" width="10.40" height="9.300" fill="#e3deda"/>
<rect x="328.85" y="448.700" width="10.40" height="9.300" fill="#2b2200"/>
<rect x="339.75" y="448.700" width="10.40" height="9.300" fill="#554400"/>
<rect x="350.65" y="448.700" width="10.40" height="9.300" fill="#806600"/>
<rect x="361.55" y="448.700" width="10.40" height="9.300" fill="#aa8800"/>
<rect x="372.45" y="448.700" width="10.40" height="9.300" fill="#d4aa00"/>
<rect x="383.35" y="448.700" width="10.40" height="9.300" fill="#ffcc00"/>
<rect x="394.25" y="448.700" width="10.40" height="9.300" fill="#ffd42a"/>
<rect x="405.15" y="448.700" width="10.40" height="9.300" fill="#ffdd55"/>
<rect x="416.05" y="448.700" width="10.40" height="9.300" fill="#ffe680"/>
<rect x="426.95" y="448.700" width="10.40" height="9.300" fill="#ffeeaa"/>
<rect x="437.85" y="448.700" width="9.83" height="9.300" fill="#fff6d5"/>
<rect x="448.19" y="448.700" width="9.84" height="9.300" fill="#28220b"/>
<rect x="458.52" y="448.700" width="9.83" height="9.300" fill="#504416"/>
<rect x="468.86" y="448.700" width="9.84" height="9.300" fill="#786721"/>
<rect x="479.19" y="448.700" width="9.83" height="9.300" fill="#a0892c"/>
<rect x="489.53" y="448.700" width="9.83" height="9.300" fill="#c8ab37"/>
<rect x="499.86" y="448.700" width="9.84" height="9.300" fill="#d3bc5f"/>
<rect x="510.20" y="448.700" width="9.83" height="9.300" fill="#decd87"/>
<rect x="520.53" y="448.700" width="9.84" height="9.300" fill="#e9ddaf"/>
<rect x="530.87" y="448.700" width="9.84" height="9.300" fill="#f4eed7"/>
<rect x="541.20" y="448.700" width="9.84" height="9.300" fill="#24221c"/>
<rect x="551.54" y="448.700" width="9.83" height="9.300" fill="#484537"/>
<rect x="561.87" y="448.700" width="9.84" height="9.300" fill="#6c6753"/>
<rect x="572.21" y="448.700" width="9.83" height="9.300" fill="#918a6f"/>
<rect x="582.54" y="448.700" width="9.84" height="9.300" fill="#aca793"/>
<rect x="592.88" y="448.700" width="9.84" height="9.300" fill="#c8c4b7"/>
<rect x="603.21" y="448.700" width="9.84" height="9.300" fill="#e3e2db"/>
<rect x="613.55" y="448.700" width="9.84" height="9.300" fill="#222b00"/>
<rect x="623.88" y="448.700" width="9.83" height="9.300" fill="#445500"/>
<rect x="634.22" y="448.700" width="9.84" height="9.300" fill="#668000"/>
<rect x="644.55" y="448.700" width="9.83" height="9.300" fill="#88aa00"/>
<path d="M657.500 451.500l3.500-3.500 3.500 3.500" stroke="#555" stroke-width=".9" fill="none"/><path d="M669.500 446.200l3.700 3.600 3.700-3.600" stroke="#111" stroke-width="1.500" fill="none"/><path d="M682.500 446.500h7.500M682.500 449.500h7.500M682.500 452.500h7.500" stroke="#111" stroke-width="1.100"/>
</svg></div>
<div id="status" class="a">
<svg class="a" style="left:0;top:0" width="690" height="19" viewBox="0 458 690 19">
  <rect x="32" y="459.300" width="28" height="7" fill="#fff"/>
  <rect x="32" y="469.300" width="28" height="8" fill="#6e6e6e"/>
  <rect x="100.500" y="459.500" width="40" height="20" rx="2.500" fill="#fff" stroke="#dadada"/>
  <path d="M123.500 468.500h6" stroke="#8a8a8a"/><path d="M133.500 468.500h6M136.500 465.500v6" stroke="#d0d0d0"/>
  <path d="M150.700 462v12" stroke="#8a8a8a" stroke-width="1.200"/>
  <!-- eye -->
  <path d="M205 469.500c2-3 7-3 9 0c-2 3-7 3-9 0z" fill="#fff" stroke="#111" stroke-width="1.100"/><circle cx="209.500" cy="469.500" r="1.500" fill="#111"/><path d="M206 466l-.8-1.200M209.500 465.300v-1.300M213 466l.8-1.200" stroke="#111" stroke-width=".8"/>
  <!-- open lock -->
  <rect x="227.500" y="468.500" width="6.500" height="5" rx=".6" fill="#111"/><path d="M231.800 468.500v-2a1.800 1.800 0 0 1 3.600 0v1" stroke="#111" stroke-width="1.100" fill="none"/>
  <!-- nav -->
  <path d="M481.500 466v5l-3.200-2.500z" fill="#555"/>
  <rect x="490.500" y="459.500" width="22" height="20" rx="2.500" fill="#f7f7f7" stroke="#dedede"/>
  <path d="M498.500 467h6l-3 3z" fill="#b0b0b0"/>
  <path d="M520.500 466v5l3.200-2.500z" fill="#555"/>
  <rect x="580.500" y="459.500" width="43.500" height="20" rx="2.500" fill="#fff" stroke="#dadada"/>
  <path d="M606.500 468.500h6M616.500 468.500h6M619.500 465.500v6" stroke="#777"/>
  <rect x="639.500" y="459.500" width="53" height="20" rx="2.500" fill="#fff" stroke="#dadada"/>
  <path d="M668.500 468.500h6M678.500 468.500h6M681.500 465.500v6" stroke="#777"/>
</svg>
<div class="t u" style="left:9.500px;top:2px;color:#b4b4b4">Fill:</div>
<div class="t u" style="left:0;top:12px;color:#9c9c9c">Stroke:</div>
<div class="t u" style="left:66px;top:12px;color:#a8a8a8;font-size:6.600px;letter-spacing:-.5px">0.0118</div>
<div class="t u" style="left:90px;top:6.500px;color:#9c9c9c">O:</div>
<div class="t u" style="left:104px;top:6.500px;color:#444;font-size:7px;letter-spacing:-.55px">100</div>
<div class="t u" style="left:155.300px;top:6.500px;color:#8c8c8c;letter-spacing:-0.55px">#breadboard</div>
<div class="t u" style="left:245.700px;top:1.700px;color:#8c8c8c;font-size:6.900px;letter-spacing:-.05px"><b>Circle</b>&nbsp; in layer <b><i>#breadboard</i></b>. Click selection again to toggle scale/rotation</div>
<div class="t u" style="left:245.700px;top:11.700px;color:#8c8c8c;font-size:6.900px;letter-spacing:-.05px">handles.</div>
<div class="t u" style="left:537px;top:2px;color:#a8a8a8;font-size:6.500px">X:</div>
<div class="t u" style="left:537px;top:11.500px;color:#a8a8a8;font-size:6.500px">Y:</div>
<div class="t u" style="left:553.500px;top:2px;color:#a0a0a0;font-size:6.500px;letter-spacing:-0.14px">0.76</div>
<div class="t u" style="left:553.500px;top:11.500px;color:#a0a0a0;font-size:6.500px;letter-spacing:-0.14px">0.51</div>
<div class="t u" style="left:572px;top:6.500px;color:#a0a0a0">Z:</div>
<div class="t u" style="left:586.500px;top:6.500px;color:#444;font-size:6.800px;letter-spacing:-.6px">837%</div>
<div class="t u" style="left:631px;top:6.500px;color:#a0a0a0">R:</div>
<div class="t u" style="left:648px;top:6.500px;color:#444;letter-spacing:-0.55px">0.00°</div>
</div>
<div id="dlg" class="a">
  <div class="a" style="left:0;top:0;width:207px;height:17px;background:#fff"></div>
  <svg class="a" style="left:0;top:0" width="207" height="396" viewBox="464 37 207 396">
    <path d="M473.500 39.600l4.300 4.300c.5.600.2 1.500-.5 1.500h-7.600c-.7 0-1-.9-.5-1.500z" fill="#111"/>
    <path d="M471 46.200c.8-.5 1.600.6 2.500.6s1.700-1.100 2.500-.6c.5.400 0 1.200-.7 1.500h-3.600c-.7-.3-1.200-1.100-.7-1.500z" fill="#111"/>
    <path d="M659.200 41.500l5.600 5.600M664.800 41.500l-5.600 5.600" stroke="#777" stroke-width=".8"/>
    <!-- tab strip -->
    <rect x="467.500" y="56" width="200.500" height="21" fill="#e9e9e9"/>
    <rect x="472" y="56" width="70" height="20.400" fill="#f5f5f5"/>
    <rect x="472" y="75.800" width="70" height="1.600" fill="#3a79c9"/>
    <rect x="650" y="56" width="18" height="21" fill="#f3f3f3"/>
    <path d="M655.500 64.500l3 3 3-3" stroke="#444" stroke-width=".9" fill="none"/>
    <!-- tab icon -->
    <rect x="479.200" y="62" width="8.400" height="8.400" fill="#fff" stroke="#333" stroke-width=".8"/><rect x="479.200" y="62" width="8.400" height="2" fill="#3a9a4a"/>
    <path d="M482.500 65.500l-1.500 1.700 1.500 1.700M484.300 65.500l1.500 1.700-1.500 1.700" stroke="#111" stroke-width=".7" fill="none"/>
    <path d="M528.300 65l3.400 3.400M531.700 65l-3.400 3.400" stroke="#333" stroke-width="1"/>
    <!-- toolbar icons -->
    <g fill="none" stroke="#b5b5b5" stroke-width=".7">
      <rect x="473.500" y="83.500" width="8.500" height="8.500"/><path d="M475 87h5.500M477.700 88v4"/>
      <rect x="494" y="83.500" width="8.500" height="8.500"/><path d="M495.500 87h5.500M498.200 88v4"/>
      <rect x="514.500" y="83.500" width="6.500" height="6.500"/><rect x="517" y="86" width="6.500" height="6.500" fill="#f4f4f4"/>
      <rect x="535.500" y="83.500" width="8.500" height="8.500" stroke="#e0b0b8"/>
    </g>
    <path d="M540 88l3.200 3.200M543.200 88l-3.200 3.200" stroke="#d0506a" stroke-width=".8"/>
    <path d="M556.500 85h4M556.500 90.800h8" stroke="#9ccf9c" stroke-width=".9"/><path d="M564.500 85.500l-2 1.500 2 1.500" stroke="#999" stroke-width=".7" fill="none"/>
    <path d="M580 85h4M576.500 90.800h8" stroke="#9ccf9c" stroke-width=".9"/><path d="M576.800 85.500l2 1.500-2 1.500" stroke="#999" stroke-width=".7" fill="none"/>
    <path d="M598.500 89.500l3.500-3.500 3.500 3.500" stroke="#555" stroke-width=".9" fill="none"/>
    <path d="M619 86l3.500 3.500 3.500-3.500" stroke="#555" stroke-width=".9" fill="none"/>
    <rect x="649" y="83.500" width="8" height="8" fill="#fff" stroke="#111" stroke-width="1"/><rect x="649" y="83.500" width="8" height="2.200" fill="#111"/><rect x="653.500" y="88.500" width="3.500" height="3" fill="#bbb" stroke="#111" stroke-width=".6"/>
    <path d="M660 86.500h5.400l-2.700 3z" fill="#8a8a8a"/>
    <!-- tree -->
    <rect x="467.500" y="98.500" width="200.500" height="152" fill="#fff" stroke="#e3e3e3" stroke-width=".8"/>
    <rect x="658.500" y="98.500" width="9.500" height="152" fill="#f2f2f2"/>
    <rect x="662" y="223" width="3" height="22" rx="1.500" fill="#9f9f9f"/>
    <rect x="468" y="192.600" width="190" height="10.500" fill="#3577d2"/>
    <!-- attr panel -->
    <rect x="467.500" y="254" width="200.500" height="175" fill="#fff" stroke="#e3e3e3" stroke-width=".8"/>
    <path d="M467.500 267.500h200.500" stroke="#e4e4e4" stroke-width=".8"/>
    <path d="M475.500 258v6M472.500 261h6" stroke="#222" stroke-width="1.300"/>
    <g transform="translate(475.800 276.6)"><path d="M-3.300-2.700h6.600M-1.300-2.700v-1.100h2.600v1.100" stroke="#222" stroke-width="1" fill="none"/><path d="M-2.800-1.700h5.600l-.5 5.800h-4.600z" fill="#222"/></g>
    <g transform="translate(475.800 290.0)"><path d="M-3.300-2.700h6.600M-1.300-2.700v-1.100h2.600v1.100" stroke="#222" stroke-width="1" fill="none"/><path d="M-2.800-1.700h5.600l-.5 5.800h-4.600z" fill="#222"/></g>
    <g transform="translate(475.800 303.4)"><path d="M-3.300-2.700h6.600M-1.300-2.700v-1.100h2.600v1.100" stroke="#222" stroke-width="1" fill="none"/><path d="M-2.800-1.700h5.600l-.5 5.800h-4.600z" fill="#222"/></g>
    <g transform="translate(475.800 316.8)"><path d="M-3.300-2.700h6.600M-1.300-2.700v-1.100h2.600v1.100" stroke="#222" stroke-width="1" fill="none"/><path d="M-2.800-1.700h5.600l-.5 5.800h-4.600z" fill="#222"/></g>
    <g transform="translate(475.800 330.3)"><path d="M-3.300-2.700h6.600M-1.300-2.700v-1.100h2.600v1.100" stroke="#222" stroke-width="1" fill="none"/><path d="M-2.800-1.700h5.600l-.5 5.800h-4.600z" fill="#222"/></g>
    <g transform="translate(475.800 343.4)"><path d="M-3.300-2.700h6.600M-1.300-2.700v-1.100h2.600v1.100" stroke="#222" stroke-width="1" fill="none"/><path d="M-2.800-1.700h5.600l-.5 5.800h-4.600z" fill="#222"/></g>
    <g transform="translate(475.800 356.6)"><path d="M-3.300-2.700h6.600M-1.300-2.700v-1.100h2.600v1.100" stroke="#222" stroke-width="1" fill="none"/><path d="M-2.800-1.700h5.600l-.5 5.800h-4.600z" fill="#222"/></g>
    <g transform="translate(475.800 369.7)"><path d="M-3.300-2.700h6.600M-1.300-2.700v-1.100h2.600v1.100" stroke="#222" stroke-width="1" fill="none"/><path d="M-2.800-1.700h5.600l-.5 5.800h-4.600z" fill="#222"/></g>
  </svg>
  <div class="t u" style="left:17.500px;top:4px;color:#8a8a8a;letter-spacing:-.3px">XML Editor - svg.breadboard.SC03-C2H5OH-Electroch...</div>
  <div class="t u" style="left:27.500px;top:25.500px;color:#8a8a8a;">XML Editor</div>
<div class="a" id="tree" style="left:3.500px;top:61.500px;width:191px;height:152px;overflow:hidden">
<div class="t tr" style="left:34.700px;top:-2.9px"><i>&lt;</i><b>path</b> <u>id</u><i>=&quot;</i><s>path155</s><i>&quot;&gt;</i></div>
<div class="t tr" style="left:34.700px;top:8.2px"><i>&lt;</i><b>rect</b> <u>id</u><i>=&quot;</i><s>connector0pin</s><i>&quot;&gt;</i></div>
<div class="t tr" style="left:34.700px;top:19.1px"><i>&lt;</i><b>rect</b> <u>id</u><i>=&quot;</i><s>connector1pin</s><i>&quot;&gt;</i></div>
<div class="t tr" style="left:34.700px;top:30.0px"><i>&lt;</i><b>rect</b> <u>id</u><i>=&quot;</i><s>connector2pin</s><i>&quot;&gt;</i></div>
<div class="t tr" style="left:34.700px;top:40.9px"><i>&lt;</i><b>rect</b> <u>id</u><i>=&quot;</i><s>connector3pin</s><i>&quot;&gt;</i></div>
<div class="t tr" style="left:34.700px;top:51.8px"><i>&lt;</i><b>rect</b> <u>id</u><i>=&quot;</i><s>connector4pin</s><i>&quot;&gt;</i></div>
<div class="t tr" style="left:34.700px;top:62.7px"><i>&lt;</i><b>rect</b> <u>id</u><i>=&quot;</i><s>connector5pin</s><i>&quot;&gt;</i></div>
<div class="t tr" style="left:34.700px;top:73.5px"><i>&lt;</i><b>rect</b> <u>id</u><i>=&quot;</i><s>connector6pin</s><i>&quot;&gt;</i></div>
<div class="t tr" style="left:34.700px;top:84.4px"><i>&lt;</i><b>circle</b> <u>id</u><i>=&quot;</i><s>connector7pin</s><i>&quot;&gt;</i></div>
<div class="t tr sel" style="left:34.700px;top:95.3px"><i>&lt;</i><b>circle</b> <u>id</u><i>=&quot;</i><s>connector8pin</s><i>&quot;&gt;</i></div>
<div class="t tr" style="left:34.700px;top:106.2px"><i>&lt;</i><b>circle</b> <u>id</u><i>=&quot;</i><s>connector9pin</s><i>&quot;&gt;</i></div>
<div class="t tr" style="left:34.700px;top:117.1px"><i>&lt;</i><b>circle</b> <u>id</u><i>=&quot;</i><s>connector10pin</s><i>&quot;&gt;</i></div>
<div class="t tr" style="left:34.700px;top:128.0px"><i>&lt;</i><b>circle</b> <u>id</u><i>=&quot;</i><s>connector11pin</s><i>&quot;&gt;</i></div>
<div class="t tr" style="left:34.700px;top:138.9px"><i>&lt;</i><b>circle</b> <u>id</u><i>=&quot;</i><s>connector12pin</s><i>&quot;&gt;</i></div>
<div class="t tr" style="left:34.700px;top:149.8px"><i>&lt;</i><b>circle</b> <u>id</u><i>=&quot;</i><s>connector13pin</s><i>&quot;&gt;</i></div>
</div>
<div class="t u at" style="left:23.200px;top:235.4px">r</div><div class="t u at" style="left:77.900px;top:235.4px;letter-spacing:-0.55px">25</div>
<div class="t u at" style="left:23.200px;top:248.8px;letter-spacing:-0.05px">stroke-width</div><div class="t u at" style="left:77.900px;top:248.8px;letter-spacing:-0.19px">11.8</div>
<div class="t u at" style="left:23.200px;top:262.2px;letter-spacing:-0.06px">stroke</div><div class="t u at" style="left:77.900px;top:262.2px;letter-spacing:-0.23px">#6d6d6d</div>
<div class="t u at" style="left:23.200px;top:275.6px">id</div><div class="t u at" style="left:77.900px;top:275.6px;letter-spacing:-0.13px">connector8pin</div>
<div class="t u at" style="left:23.200px;top:289.1px;letter-spacing:0.07px">gorn</div><div class="t u at" style="left:77.900px;top:289.1px;letter-spacing:-0.40px">0.1.65</div>
<div class="t u at" style="left:23.200px;top:302.2px">fill</div><div class="t u at" style="left:77.900px;top:302.2px;letter-spacing:.38px">#ffffff</div>
<div class="t u at" style="left:23.200px;top:315.4px">cy</div><div class="t u at" style="left:77.900px;top:315.4px;letter-spacing:-0.47px">597.83484</div>
<div class="t u at" style="left:23.200px;top:328.5px">cx</div><div class="t u at" style="left:77.900px;top:328.5px;letter-spacing:-0.47px">566.76617</div>
<div class="t u" style="left:23.200px;top:220.200px;color:#aaa">Name</div><div class="t u" style="left:77.900px;top:220.200px;color:#aaa">Value</div>
</div>

<svg class="a" style="left:0;top:0;pointer-events:none" width="690" height="477" viewBox="0 0 690 477" fill="none" stroke="#3ad61c" stroke-width="1.900" stroke-linecap="round" stroke-linejoin="round">
  <path d="M310.400 63.100C308 63 306.500 63 305.200 62.200C302 60 300.500 58.500 299.100 57C297 54 296.500 53 295.700 50.900C294 48 293.200 46.500 292.500 44.800C291 42 290.400 40 290.400 37.800C290.200 35 290.500 33 291.300 31.700C292.500 29.500 294.500 27.500 296.500 26.500C299 25 302 24 306.100 23C312 21.500 318 20.400 323.500 19.600C329 18.800 335 18.200 340.900 17.800C347 17.500 353 17.500 358.300 17.800C363 18.100 367 18.600 370.400 19.600C373.500 20.500 376 22 377.400 23.900C379 26 379.800 28.500 380 30.900C380.200 34 379.800 37 379.100 39.600C378.300 43 376.800 46.500 374.800 49.100C373 51.500 371.500 54.500 368.700 55.600C365 56.800 359 56.800 354.800 57C349 57.400 343 57.700 337.400 57.800C331.500 57.900 325.500 57.800 320 57.300C315 56.900 310.500 56.400 306.100 55.600C302.500 54.900 300 53.800 297.400 52.600C296 52 295 51.500 293.900 50.900"/>
  <path d="M469.800 260.900C466.500 260 464 259.400 461.100 259.100C458.500 258.800 455.500 259 453.500 259.800C451 260.700 449.200 261.800 448 263.500C446.300 266 445.400 269 444.800 271.700C444 275.500 443.400 279 443.300 282.600C443.200 285.500 443.600 289 444.800 291.300C445.800 293.200 448 294.200 450.200 294.600C455.500 295.400 462 295.300 467.600 295.200C478.500 295.200 489.500 294.900 500.200 294.600C511 294.300 522 294 532.800 293.500C541 293 549 292.300 556.700 291.300C561 290.700 565.500 289.800 568.700 288C570.800 286.700 572.200 284.800 572.400 282.600C572.700 279.700 572 276.500 570.900 273.900C569.800 271.300 568 268.500 565.400 267C563 265.500 560 264.400 556.700 264.100C549 263.700 540.800 264 532.800 264.100C522 264.300 511 264.700 500.200 264.800C493 264.900 485.700 264.900 478.500 264.800C472.500 264.700 467 264.200 461.100 264.100C457.500 264 454 264.400 450.200 264.800"/>
</svg>
</body></html>
